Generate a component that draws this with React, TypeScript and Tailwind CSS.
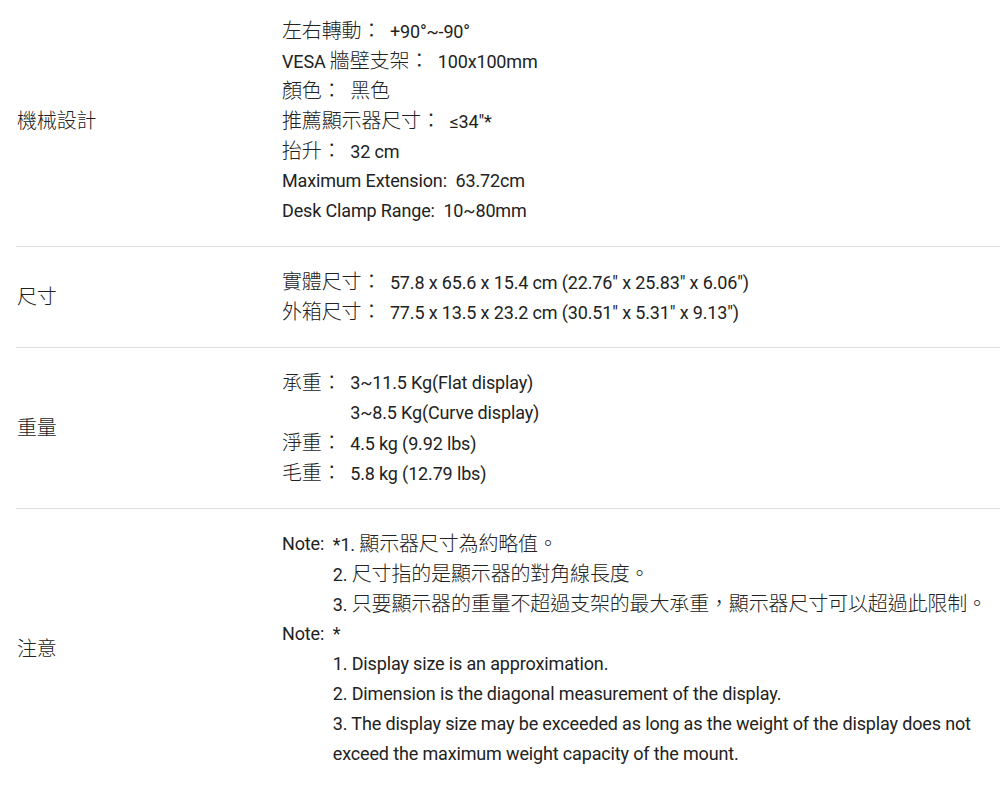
import type { ReactNode } from 'react'

// CJK runs are set a little larger and lighter than the Latin text, as in the reference
function Z({ children }: { children: ReactNode }) {
  return <span className="text-[20px] font-light">{children}</span>
}

const SEP = '\u00a0 '

function Row({ label, first, children }: { label: string; first?: boolean; children: ReactNode }) {
  return (
    <div
      className={`grid grid-cols-[266px_1fr] items-center border-b border-[#dedede] ${
        first ? 'pt-4 pb-5' : 'py-5'
      }`}
    >
      <div className="pl-px">
        <Z>{label}</Z>
      </div>
      <div>{children}</div>
    </div>
  )
}

function Line({ children }: { children: ReactNode }) {
  return <div className="h-[30px] whitespace-nowrap">{children}</div>
}

export default function App() {
  return (
    <div
      className="bg-white pl-4 text-[18px] leading-[30px] text-[#222] tracking-[-0.15px] h-[788px] overflow-hidden"
      style={{ fontFamily: 'Roboto, "Noto Sans CJK TC", sans-serif' }}
    >
      <Row label="機械設計" first>
        <Line>
          <Z>左右轉動：</Z>
          {SEP}+90°~-90°
        </Line>
        <Line>
          VESA <Z>牆壁支架：</Z>
          {SEP}100x100mm
        </Line>
        <Line>
          <Z>顏色：</Z>
          {SEP}
          <Z>黑色</Z>
        </Line>
        <Line>
          <Z>推薦顯示器尺寸：</Z>
          {SEP}≤34"*
        </Line>
        <Line>
          <Z>抬升：</Z>
          {SEP}32 cm
        </Line>
        <Line>Maximum Extension:{SEP}63.72cm</Line>
        <Line>Desk Clamp Range:{SEP}10~80mm</Line>
      </Row>

      <Row label="尺寸">
        <Line>
          <Z>實體尺寸：</Z>
          {SEP}57.8 x 65.6 x 15.4 cm (22.76" x 25.83" x 6.06")
        </Line>
        <Line>
          <Z>外箱尺寸：</Z>
          {SEP}77.5 x 13.5 x 23.2 cm (30.51" x 5.31" x 9.13")
        </Line>
      </Row>

      <Row label="重量">
        <div className="flex">
          <span className="whitespace-pre">
            <Z>承重：</Z>
            {SEP}
          </span>
          <div>
            <Line>3~11.5 Kg(Flat display)</Line>
            <Line>3~8.5 Kg(Curve display)</Line>
          </div>
        </div>
        <Line>
          <Z>淨重：</Z>
          {SEP}4.5 kg (9.92 lbs)
        </Line>
        <Line>
          <Z>毛重：</Z>
          {SEP}5.8 kg (12.79 lbs)
        </Line>
      </Row>

      <Row label="注意">
        <div className="flex">
          <span className="whitespace-pre">Note:{SEP}</span>
          <div>
            <Line>
              *1. <Z>顯示器尺寸為約略值。</Z>
            </Line>
            <Line>
              2. <Z>尺寸指的是顯示器的對角線長度。</Z>
            </Line>
            <Line>
              3. <Z>只要顯示器的重量不超過支架的最大承重，顯示器尺寸可以超過此限制。</Z>
            </Line>
          </div>
        </div>
        <div className="flex">
          <span className="whitespace-pre">Note:{SEP}</span>
          <div>
            <Line>*</Line>
            <Line>1. Display size is an approximation.</Line>
            <Line>2. Dimension is the diagonal measurement of the display.</Line>
            <div>
              3. The display size may be exceeded as long as the weight of the display does not exceed the
              maximum weight capacity of the mount.
            </div>
          </div>
        </div>
      </Row>
    </div>
  )
}
